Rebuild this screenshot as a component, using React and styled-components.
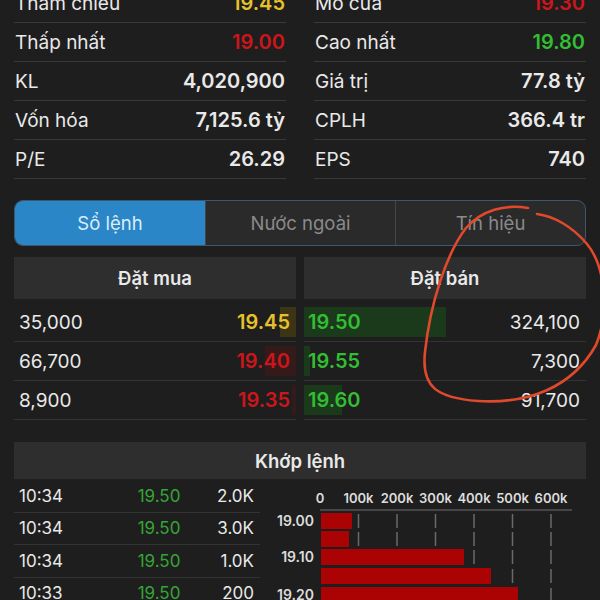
import React from "react";
import styled, { createGlobalStyle } from "styled-components";

const GlobalStyle = createGlobalStyle`
	body {
		margin: 0;
		background: #1e1e1e;
		font-family: "Inter", "Noto Sans", sans-serif;
		-webkit-font-smoothing: antialiased;
	}
`

const colors = {
	white: "#e9e9e9",
	yellow: "#e6c12b",
	red: "#cc161c",
	green: "#33bd33",
	dimGreen: "#35a535",
}

const Page = styled.div`
	position: relative;
	width: 600px;
	height: 600px;
	overflow: hidden;
	background: #1e1e1e;
`

const Content = styled.div`
	margin-top: -16px;
	padding: 0 14px;
	display: flex;
	flex-direction: column;
`

const StatsGrid = styled.div`
	display: grid;
	grid-template-columns: 1fr 1fr;
	column-gap: 28px;
`

const StatRow = styled.div`
	box-sizing: border-box;
	height: 39px;
	display: flex;
	align-items: center;
	justify-content: space-between;
	padding: 0 1px;
	border-bottom: 1px solid #383838;
	font-size: 19px;
`

const StatLabel = styled.span`
	color: ${colors.white};
`

const StatValue = styled.span`
	color: ${p => p.color || colors.white};
	font-size: 20px;
	font-weight: 600;
`

const Tabs = styled.div`
	margin-top: 21px;
	height: 46px;
	box-sizing: border-box;
	display: grid;
	grid-template-columns: repeat(3, 1fr);
	border: 1px solid #3c5870;
	border-radius: 9px;
	overflow: hidden;
	background: #2a2a2a;
`

const Tab = styled.div`
	display: flex;
	align-items: center;
	justify-content: center;
	font-size: 18.5px;
	background: ${p => p.active ? "#2a86c6" : "transparent"};
	color: ${p => p.active ? "#dcedfa" : "#8a8a8a"};
	& + & {
		border-left: 1px solid #454545;
	}
`

const Book = styled.div`
	margin-top: 11px;
	display: grid;
	grid-template-columns: 1fr 1fr;
	column-gap: 8px;
`

const Header = styled.div`
	height: ${p => p.h || 42}px;
	display: flex;
	align-items: center;
	justify-content: center;
	background: #2e2e2e;
	color: ${colors.white};
	font-size: 18.5px;
	font-weight: 600;
`

const BookRows = styled.div`
	margin-top: 4px;
`

const BookRow = styled.div`
	position: relative;
	box-sizing: border-box;
	height: 39px;
	display: flex;
	align-items: center;
	justify-content: space-between;
	padding: ${p => p.side === "buy" ? "0 6px 0 5px" : "0 6px 0 4px"};
	border-bottom: 1px solid #333;
	font-size: 19px;
`

const DepthBar = styled.div`
	position: absolute;
	top: 4px;
	bottom: 4px;
	${p => p.side === "buy" ? "right: 0;" : "left: 0;"}
	background: ${p => p.bg};
`

const Qty = styled.span`
	position: relative;
	color: ${colors.white};
`

const Price = styled.span`
	position: relative;
	color: ${p => p.color};
	font-size: 20px;
	font-weight: 600;
`

const Match = styled.div`
	margin-top: 22px;
	display: flex;
	flex-direction: column;
`

const MatchBody = styled.div`
	display: flex;
	padding-top: 1px;
`

const TradeList = styled.div`
	width: 246px;
	flex-shrink: 0;
`

const TradeRow = styled.div`
	box-sizing: border-box;
	height: 32.5px;
	display: grid;
	grid-template-columns: 95px 90px 1fr;
	align-items: center;
	padding: 0 6px 0 5px;
	border-bottom: 1px solid #333;
	font-size: 17px;
	color: ${colors.white};
`

const TradePrice = styled.span`
	color: ${colors.dimGreen};
	text-align: center;
`

const TradeVol = styled.span`
	text-align: right;
`

const Overlay = styled.svg`
	position: absolute;
	left: 0;
	top: 0;
	pointer-events: none;
`

const stats = [
	[["Tham chiếu", "19.45", colors.yellow], ["Mở cửa", "19.30", colors.red]],
	[["Thấp nhất", "19.00", colors.red], ["Cao nhất", "19.80", colors.green]],
	[["KL", "4,020,900"], ["Giá trị", "77.8 tỷ"]],
	[["Vốn hóa", "7,125.6 tỷ"], ["CPLH", "366.4 tr"]],
	[["P/E", "26.29"], ["EPS", "740"]],
]

const buys = [
	{ qty: "35,000", price: "19.45", color: colors.yellow, bar: 16, bg: "#3b3516" },
	{ qty: "66,700", price: "19.40", color: colors.red, bar: 31, bg: "#361a1a" },
	{ qty: "8,900", price: "19.35", color: colors.red, bar: 4, bg: "#341a1a" },
]

const sells = [
	{ qty: "324,100", price: "19.50", bar: 142 },
	{ qty: "7,300", price: "19.55", bar: 6 },
	{ qty: "91,700", price: "19.60", bar: 38 },
]

const trades = [
	["10:34", "19.50", "2.0K"],
	["10:34", "19.50", "3.0K"],
	["10:34", "19.50", "1.0K"],
	["10:33", "19.50", "200"],
]

const ticks = ["0", "100k", "200k", "300k", "400k", "500k", "600k"]
const volBars = [
	{ y: 33, w: 31, label: "19.00" },
	{ y: 51, w: 28 },
	{ y: 69, w: 143, label: "19.10" },
	{ y: 88, w: 170 },
	{ y: 107, w: 197, label: "19.20" },
]

const VolumeChart = () => {
	const x0 = 60
	const step = 38.5
	return (
		<svg width="326" height="130" style={{ flexShrink: 0 }}>
			{ticks.map((t, i) => (
				<text key={t} x={x0 + i * step} y="23" textAnchor="middle"
					fill="#dcdcdc" fontSize="13" fontWeight="600" fontFamily="Inter, sans-serif">{t}</text>
			))}
			<line x1={x0} y1="30" x2="312" y2="30" stroke="#555" strokeWidth="1.5" />
			{volBars.map((b, r) => ticks.slice(1).map((t, i) => (
				<line key={r + t} x1={x0 + (i + 1) * step} x2={x0 + (i + 1) * step}
					y1={b.y + 1} y2={b.y + 15} stroke="#6a6a6a" strokeWidth="1.5" />
			)))}
			{volBars.map(b => (
				<rect key={b.y} x="61" y={b.y} width={b.w} height="16" fill="#ab0303" />
			))}
			{volBars.filter(b => b.label).map(b => (
				<text key={b.label} x="54" y={b.y + 13} textAnchor="end"
					fill="#dcdcdc" fontSize="14" fontWeight="600" fontFamily="Inter, sans-serif">{b.label}</text>
			))}
		</svg>
	)
}

const App = () => {
	return (
		<Page>
			<GlobalStyle />
			<Content>
				<StatsGrid>
					{stats.map(pair => pair.map(([label, value, color]) => (
						<StatRow key={label}>
							<StatLabel>{label}</StatLabel>
							<StatValue color={color}>{value}</StatValue>
						</StatRow>
					)))}
				</StatsGrid>

				<Tabs>
					<Tab active>Sổ lệnh</Tab>
					<Tab>Nước ngoài</Tab>
					<Tab>Tín hiệu</Tab>
				</Tabs>

				<Book>
					<div>
						<Header>Đặt mua</Header>
						<BookRows>
							{buys.map(b => (
								<BookRow key={b.price} side="buy">
									<DepthBar side="buy" bg={b.bg} style={{ width: b.bar }} />
									<Qty>{b.qty}</Qty>
									<Price color={b.color}>{b.price}</Price>
								</BookRow>
							))}
						</BookRows>
					</div>
					<div>
						<Header>Đặt bán</Header>
						<BookRows>
							{sells.map(s => (
								<BookRow key={s.price} side="sell">
									<DepthBar side="sell" bg="#1b3a1c" style={{ width: s.bar }} />
									<Price color={colors.green}>{s.price}</Price>
									<Qty>{s.qty}</Qty>
								</BookRow>
							))}
						</BookRows>
					</div>
				</Book>

				<Match>
					<Header h={37}>Khớp lệnh</Header>
					<MatchBody>
						<TradeList>
							{trades.map(([time, price, vol], i) => (
								<TradeRow key={i}>
									<span>{time}</span>
									<TradePrice>{price}</TradePrice>
									<TradeVol>{vol}</TradeVol>
								</TradeRow>
							))}
						</TradeList>
						<VolumeChart />
					</MatchBody>
				</Match>
			</Content>

			<Overlay width="600" height="600">
				<path
					d="M 528 208 C 505 204, 482 210, 466 228 C 446 254, 430 305, 425 352 C 421 388, 438 398, 478 401 C 528 404, 572 388, 596 345 C 612 305, 602 262, 587 244 C 572 226, 553 216, 537 214"
					fill="none" stroke="#e0492c" strokeWidth="2.6" strokeLinecap="round" />
			</Overlay>
		</Page>
	)
}

export default App
